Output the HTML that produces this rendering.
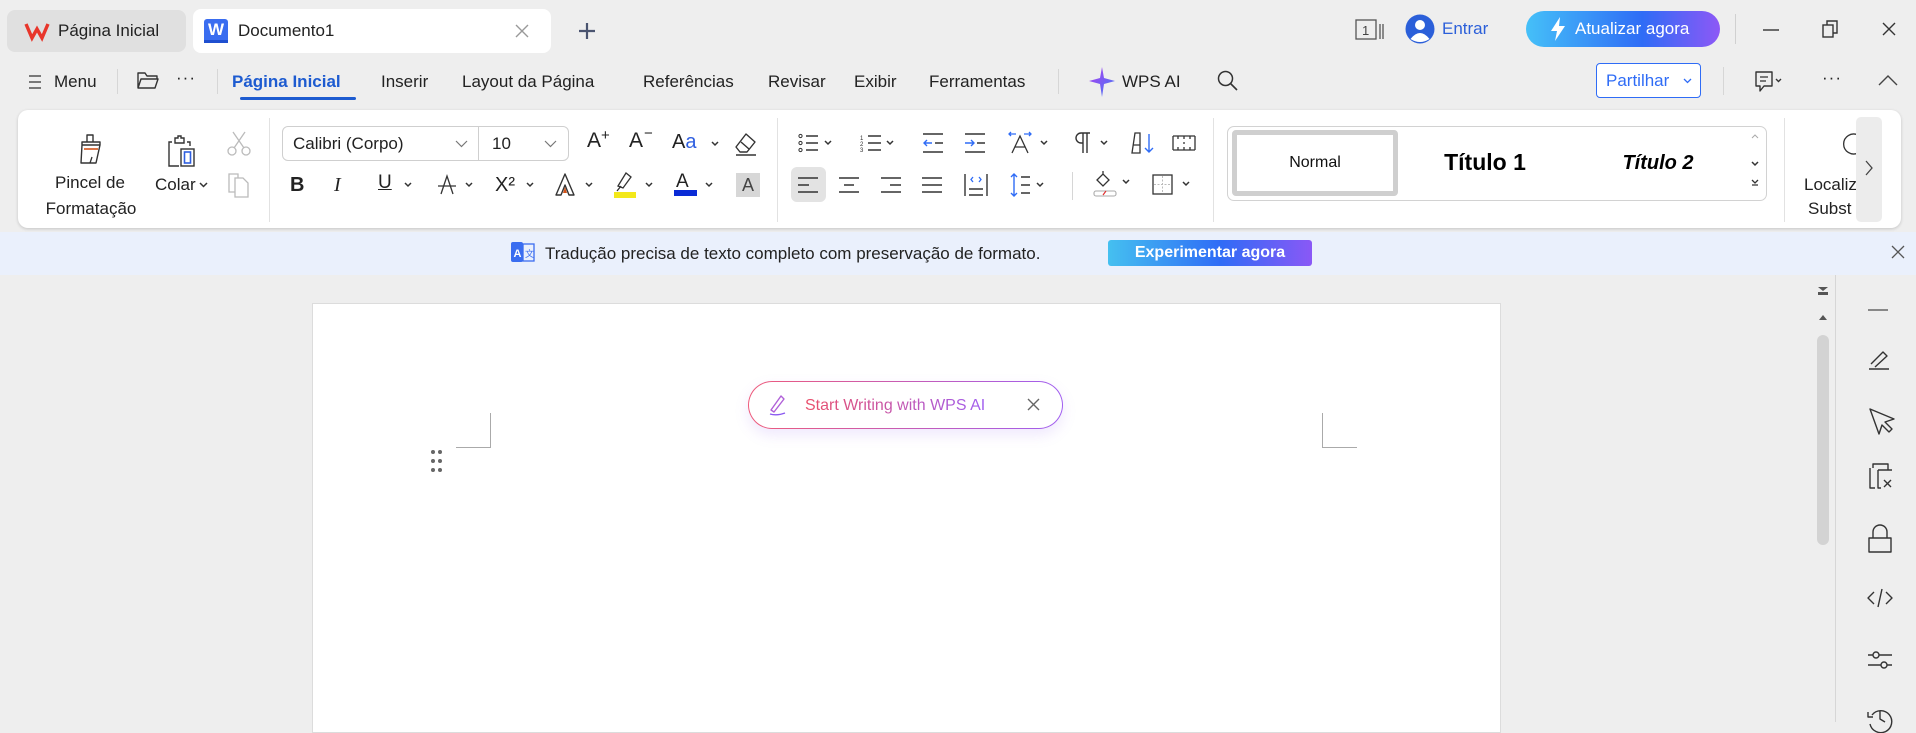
<!DOCTYPE html>
<html><head><meta charset="utf-8"><style>
*{margin:0;padding:0;box-sizing:border-box}
body{width:1916px;height:722px;overflow:hidden;background:#eeeeee;font-family:"Liberation Sans",sans-serif;color:#222;position:relative}
.a{position:absolute}
.t{position:absolute;white-space:nowrap;font-size:17px;line-height:20px;color:#222}
.c{transform:translateX(-50%)}
svg{position:absolute;overflow:visible}
.sep{position:absolute;width:1px;background:#d6d6d6}
</style></head><body>
<!-- tabs -->
<div class="a" style="left:7px;top:10px;width:179px;height:42px;background:#e0e0e0;border-radius:8px"></div>
<svg style="left:25px;top:22px" width="24" height="18" viewBox="0 0 24 18"><path d="M1 2 L7 16 L12 7 L17 16 L23 2" fill="none" stroke="#e8362b" stroke-width="3.4" stroke-linejoin="miter"/></svg>
<div class="t" style="left:58px;top:21px">Página Inicial</div>
<div class="a" style="left:193px;top:9px;width:358px;height:44px;background:#fff;border-radius:8px"></div>
<div class="a" style="left:204px;top:19px;width:24px;height:24px;background:#3a6df0;border-radius:3px;color:#fff;font-weight:bold;font-size:17px;text-align:center;line-height:22px">W</div>
<div class="a" style="left:204px;top:40px;width:24px;height:3px;background:#1f4fd0"></div>
<div class="t" style="left:238px;top:21px">Documento1</div>
<svg style="left:515px;top:24px" width="14" height="14"><path d="M1 1L13 13M13 1L1 13" stroke="#999" stroke-width="1.4"/></svg>
<svg style="left:578px;top:22px" width="18" height="18"><path d="M9 1V17M1 9H17" stroke="#4a5470" stroke-width="2.2"/></svg>
<!-- top right -->
<svg style="left:1355px;top:19px" width="30" height="22"><rect x="1" y="1" width="20" height="19" fill="none" stroke="#555" stroke-width="1.3"/><text x="7" y="16" font-size="13" font-family="Liberation Sans" fill="#444">1</text><path d="M25 5V20M28 5V20" stroke="#555" stroke-width="1.3"/></svg>
<svg style="left:1405px;top:14px" width="30" height="30"><circle cx="15" cy="15" r="14.5" fill="#2b5fd9"/><circle cx="15" cy="11" r="5" fill="#fff"/><path d="M5.5 25 Q15 13 24.5 25 Q15 31 5.5 25Z" fill="#fff"/></svg>
<div class="t" style="left:1442px;top:19px;color:#2b5fd9">Entrar</div>
<div class="a" style="left:1526px;top:11px;width:194px;height:36px;border-radius:18px;background:linear-gradient(90deg,#45c0f8,#2f6cf6 60%,#8d58f6)"></div>
<svg style="left:1550px;top:17px" width="16" height="24"><path d="M10 0L1 14H7L5 24L15 9H9Z" fill="#fff"/></svg>
<div class="t" style="left:1575px;top:19px;color:#fff">Atualizar agora</div>
<div class="sep" style="left:1735px;top:14px;height:30px;background:#d0d0d0"></div>
<svg style="left:1763px;top:29px" width="16" height="2"><path d="M0 1H16" stroke="#333" stroke-width="1.4"/></svg>
<svg style="left:1822px;top:20px" width="16" height="18"><rect x="1" y="5" width="10" height="12" fill="none" stroke="#333" stroke-width="1.4"/><path d="M5 5V1H15V13H11" fill="none" stroke="#333" stroke-width="1.4"/></svg>
<svg style="left:1882px;top:22px" width="14" height="14"><path d="M1 1L13 13M13 1L1 13" stroke="#333" stroke-width="1.4"/></svg>
<!-- menu row -->
<svg style="left:29px;top:75px" width="12" height="14"><path d="M0 1H12M0 7H12M0 13H12" stroke="#333" stroke-width="1.3"/></svg>
<div class="t" style="left:54px;top:72px">Menu</div>
<div class="sep" style="left:117px;top:69px;height:25px"></div>
<svg style="left:137px;top:71px" width="22" height="19"><path d="M1 17V2H8L10 5H20V8M1 17L4 8H21L18 17Z" fill="none" stroke="#333" stroke-width="1.4" stroke-linejoin="round"/></svg>
<div class="t" style="left:176px;top:68px;letter-spacing:1px">···</div>
<div class="sep" style="left:217px;top:69px;height:25px"></div>
<div class="t" style="left:232px;top:72px;color:#1d5bd0;font-weight:bold">Página Inicial</div>
<div class="a" style="left:240px;top:97px;width:116px;height:3px;background:#1d5bd0;border-radius:2px"></div>
<div class="t" style="left:381px;top:72px">Inserir</div>
<div class="t" style="left:462px;top:72px">Layout da Página</div>
<div class="t" style="left:643px;top:72px">Referências</div>
<div class="t" style="left:768px;top:72px">Revisar</div>
<div class="t" style="left:854px;top:72px">Exibir</div>
<div class="t" style="left:929px;top:72px">Ferramentas</div>
<div class="sep" style="left:1058px;top:69px;height:25px"></div>
<svg style="left:1088px;top:67px" width="28" height="30"><defs><linearGradient id="g" x1="0" y1="0" x2="1" y2="1"><stop offset="0" stop-color="#b23cf0"/><stop offset="1" stop-color="#3f7cf5"/></linearGradient></defs><path d="M14 0 L16 11 L27 14 L16 17 L14 30 L12 17 L1 14 L12 11Z" fill="url(#g)"/></svg>
<div class="t" style="left:1122px;top:72px">WPS AI</div>
<svg style="left:1217px;top:70px" width="22" height="22"><circle cx="8.5" cy="8.5" r="7" fill="none" stroke="#333" stroke-width="1.5"/><path d="M13.5 13.5L20 20" stroke="#333" stroke-width="1.6"/></svg>
<div class="a" style="left:1596px;top:63px;width:105px;height:35px;border:1.3px solid #2f6cf6;border-radius:4px;background:#fff"></div>
<div class="t" style="left:1606px;top:71px;color:#2f6cf6">Partilhar</div>
<svg style="left:1683px;top:78px" width="9" height="6"><path d="M1 1L4.5 4.5L8 1" fill="none" stroke="#2f6cf6" stroke-width="1.3"/></svg>
<div class="sep" style="left:1723px;top:67px;height:28px"></div>
<svg style="left:1755px;top:71px" width="28" height="22"><path d="M1 1H17V15H9L5 20V15H1Z" fill="none" stroke="#333" stroke-width="1.4" stroke-linejoin="round"/><path d="M5 6H13M5 10H11" stroke="#333" stroke-width="1.3"/><path d="M21 8L23.5 10.5L26 8" fill="none" stroke="#333" stroke-width="1.4"/></svg>
<div class="t" style="left:1822px;top:68px;letter-spacing:1px">···</div>
<svg style="left:1878px;top:74px" width="20" height="12"><path d="M1 11L10 2L19 11" fill="none" stroke="#444" stroke-width="1.4"/></svg>
<!-- ribbon -->
<div class="a" style="left:18px;top:110px;width:1883px;height:118px;background:#fff;border-radius:10px;box-shadow:0 1px 3px rgba(0,0,0,.18)"></div>
<svg style="left:76px;top:133px" width="30" height="34"><path d="M11 9V2H17V9M6 12H24V9H6Z M6 12L5 30H20L24 12" fill="none" stroke="#333" stroke-width="1.4" stroke-linejoin="round"/><path d="M8 16H22" stroke="#d3541b" stroke-width="1.6"/><path d="M14 30L16 24" stroke="#333" stroke-width="1.3"/></svg>
<div class="t c" style="left:90px;top:173px">Pincel de</div>
<div class="t c" style="left:91px;top:199px">Formatação</div>
<svg style="left:167px;top:134px" width="32" height="34"><path d="M5 8H2V32H12M20 8H23V12" fill="none" stroke="#333" stroke-width="1.4"/><path d="M8 9V4H11V2H14V4H17V9Z" fill="none" stroke="#333" stroke-width="1.4"/><rect x="14" y="15" width="13" height="17" fill="none" stroke="#333" stroke-width="1.4"/><rect x="17.5" y="18" width="6" height="11" fill="none" stroke="#2f5fe0" stroke-width="1.6"/></svg>
<div class="t" style="left:155px;top:175px">Colar</div>
<svg style="left:199px;top:182px" width="9" height="6"><path d="M1 1L4.5 4.5L8 1" fill="none" stroke="#333" stroke-width="1.5"/></svg>
<svg style="left:227px;top:131px" width="24" height="26"><circle cx="5" cy="20" r="4" fill="none" stroke="#bbb" stroke-width="1.3"/><circle cx="19" cy="20" r="4" fill="none" stroke="#bbb" stroke-width="1.3"/><path d="M7 17L18 1M17 17L6 1" stroke="#bbb" stroke-width="1.3"/></svg>
<svg style="left:227px;top:172px" width="24" height="26"><path d="M8 20H2V2H11V6" fill="none" stroke="#bbb" stroke-width="1.3"/><path d="M8 6H16L21 11V25H8Z" fill="none" stroke="#bbb" stroke-width="1.3"/></svg>
<div class="sep" style="left:269px;top:118px;height:104px;background:#e2e2e2"></div>
<div class="a" style="left:282px;top:126px;width:287px;height:35px;border:1px solid #cfcfcf;border-radius:6px"></div>
<div class="sep" style="left:478px;top:126px;height:35px;background:#cfcfcf"></div>
<div class="t" style="left:293px;top:134px">Calibri (Corpo)</div>
<svg style="left:455px;top:140px" width="13" height="8"><path d="M1 1L6.5 6.5L12 1" fill="none" stroke="#777" stroke-width="1.2"/></svg>
<div class="t" style="left:492px;top:134px">10</div>
<svg style="left:544px;top:140px" width="13" height="8"><path d="M1 1L6.5 6.5L12 1" fill="none" stroke="#777" stroke-width="1.2"/></svg>
<div class="t" style="left:587px;top:131px;font-size:21px">A</div><div class="t" style="left:601px;top:126px;font-size:15px">+</div>
<div class="t" style="left:629px;top:131px;font-size:21px">A</div><div class="t" style="left:644px;top:124px;font-size:15px">−</div>
<div class="t" style="left:672px;top:132px;font-size:20px">A<span style="color:#2f5fe0">a</span></div>
<svg style="left:711px;top:141px" width="8" height="6"><path d="M1 1L4 4L7 1" fill="none" stroke="#333" stroke-width="1.5"/></svg>
<svg style="left:733px;top:131px" width="26" height="26"><path d="M3 16L13 3L22 11L14 21H7Z M8 11L16 18" fill="none" stroke="#333" stroke-width="1.4" stroke-linejoin="round"/><path d="M3 24H23" stroke="#333" stroke-width="1.4"/></svg>
<!-- row2 left -->
<div class="t" style="left:290px;top:175px;font-size:20px;font-weight:bold">B</div>
<div class="t" style="left:334px;top:175px;font-size:20px;font-style:italic;font-family:'Liberation Serif'">I</div>
<div class="t" style="left:378px;top:173px;font-size:19px;text-decoration:underline">U</div>
<svg style="left:404px;top:182px" width="8" height="6"><path d="M1 1L4 4L7 1" fill="none" stroke="#333" stroke-width="1.5"/></svg>
<svg style="left:437px;top:174px" width="20" height="22"><path d="M4 20L10 2L16 20" fill="none" stroke="#333" stroke-width="1.3"/><path d="M1 12H19" stroke="#333" stroke-width="1.3"/></svg>
<svg style="left:465px;top:182px" width="8" height="6"><path d="M1 1L4 4L7 1" fill="none" stroke="#333" stroke-width="1.5"/></svg>
<div class="t" style="left:495px;top:175px;font-size:20px">X²</div>
<svg style="left:526px;top:182px" width="8" height="6"><path d="M1 1L4 4L7 1" fill="none" stroke="#333" stroke-width="1.5"/></svg>
<svg style="left:554px;top:173px" width="22" height="24"><path d="M2 22L11 1L20 22H15L11 12L7 22Z" fill="none" stroke="#333" stroke-width="1.4" stroke-linejoin="round"/><path d="M9 20L11 14L13 20Z" fill="#d3541b"/></svg>
<svg style="left:585px;top:182px" width="8" height="6"><path d="M1 1L4 4L7 1" fill="none" stroke="#333" stroke-width="1.5"/></svg>
<svg style="left:613px;top:170px" width="26" height="28"><path d="M5 16L13 3L18 7L10 18Z M4 21L8 16" fill="none" stroke="#333" stroke-width="1.3"/><rect x="1" y="22" width="22" height="6" fill="#f3e81a"/></svg>
<svg style="left:645px;top:182px" width="8" height="6"><path d="M1 1L4 4L7 1" fill="none" stroke="#333" stroke-width="1.5"/></svg>
<div class="t" style="left:676px;top:172px;font-size:19px">A</div>
<div class="a" style="left:674px;top:190px;width:23px;height:6px;background:#0a2bd6"></div>
<svg style="left:705px;top:182px" width="8" height="6"><path d="M1 1L4 4L7 1" fill="none" stroke="#333" stroke-width="1.5"/></svg>
<div class="a" style="left:736px;top:173px;width:24px;height:24px;background:#d7d7d7;text-align:center;line-height:24px;font-size:18px;color:#444">A</div>
<div class="sep" style="left:777px;top:118px;height:104px;background:#e2e2e2"></div>
<!-- para row1 -->
<svg style="left:798px;top:134px" width="40" height="18"><circle cx="2.5" cy="2" r="1.6" fill="none" stroke="#333"/><circle cx="2.5" cy="9" r="1.6" fill="none" stroke="#333"/><circle cx="2.5" cy="16" r="1.6" fill="none" stroke="#333"/><path d="M8 2H20M8 9H20M8 16H20" stroke="#333" stroke-width="1.4"/><path d="M27 7L30 10L33 7" fill="none" stroke="#333" stroke-width="1.5"/></svg>
<svg style="left:860px;top:134px" width="40" height="18"><text x="0" y="6" font-size="6" font-family="Liberation Sans" fill="#333">1</text><text x="0" y="12" font-size="6" fill="#333" font-family="Liberation Sans">2</text><text x="0" y="18" font-size="6" fill="#333" font-family="Liberation Sans">3</text><path d="M8 2H21M8 9H21M8 16H21" stroke="#333" stroke-width="1.4"/><path d="M27 7L30 10L33 7" fill="none" stroke="#333" stroke-width="1.5"/></svg>
<svg style="left:922px;top:133px" width="22" height="20"><path d="M1 1H21M1 19H21M13 10H21" stroke="#333" stroke-width="1.4"/><path d="M10 10H2M5 7L2 10L5 13" fill="none" stroke="#2f6cf6" stroke-width="1.4"/></svg>
<svg style="left:964px;top:133px" width="22" height="20"><path d="M1 1H21M1 19H21M13 10H21" stroke="#333" stroke-width="1.4"/><path d="M1 10H10M7 7L10 10L7 13" fill="none" stroke="#2f6cf6" stroke-width="1.4"/></svg>
<svg style="left:1008px;top:131px" width="45" height="24"><path d="M4 22L12 5L20 22M7 16H17" fill="none" stroke="#333" stroke-width="1.3"/><path d="M3 5L1 3L3 1M1 3H8M21 5L23 3L21 1M23 3H16" fill="none" stroke="#2f6cf6" stroke-width="1.3"/><path d="M33 10L36 13L39 10" fill="none" stroke="#333" stroke-width="1.5"/></svg>
<svg style="left:1072px;top:132px" width="40" height="22"><path d="M9 1H18M11 1V21M15 1V21M9 1A5 5 0 0 0 9 11H11" fill="none" stroke="#333" stroke-width="1.4"/><path d="M29 9L32 12L35 9" fill="none" stroke="#333" stroke-width="1.5"/></svg>
<svg style="left:1130px;top:131px" width="26" height="24"><path d="M2 22L5 2H10V22Z M3 14H10" fill="none" stroke="#333" stroke-width="1.3"/><path d="M19 3V21M15 17L19 21L23 17" fill="none" stroke="#2f6cf6" stroke-width="1.4"/></svg>
<svg style="left:1172px;top:135px" width="24" height="16"><path d="M1 1H23M1 15H23M1 1V15M23 1V15M6 1V4M12 1V4M18 1V4M6 12V15M12 12V15M18 12V15M12 7V9" fill="none" stroke="#333" stroke-width="1.3"/></svg>
<!-- para row2 -->
<div class="a" style="left:791px;top:167px;width:35px;height:35px;background:#e3e3e3;border-radius:6px"></div>
<svg style="left:798px;top:177px" width="21" height="16"><path d="M0 1H20M0 8H11M0 15H20" stroke="#333" stroke-width="1.4"/></svg>
<svg style="left:839px;top:177px" width="21" height="16"><path d="M0 1H20M5 8H15M0 15H20" stroke="#333" stroke-width="1.4"/></svg>
<svg style="left:881px;top:177px" width="21" height="16"><path d="M0 1H20M9 8H20M0 15H20" stroke="#333" stroke-width="1.4"/></svg>
<svg style="left:922px;top:177px" width="21" height="16"><path d="M0 1H20M0 8H20M0 15H20" stroke="#333" stroke-width="1.4"/></svg>
<svg style="left:964px;top:174px" width="24" height="22"><path d="M1 0V22M23 0V22M5 15H19M5 21H19" stroke="#333" stroke-width="1.4"/><path d="M9 3L7 5.5L9 8M15 3L17 5.5L15 8" fill="none" stroke="#2f6cf6" stroke-width="1.3"/></svg>
<svg style="left:1010px;top:173px" width="40" height="24"><path d="M4 1V23M1 4L4 1L7 4M1 20L4 23L7 20" fill="none" stroke="#2f6cf6" stroke-width="1.4"/><path d="M11 4H20M11 12H20M11 20H20" stroke="#333" stroke-width="1.4"/><path d="M27 10L30 13L33 10" fill="none" stroke="#333" stroke-width="1.5"/></svg>
<div class="sep" style="left:1072px;top:172px;height:28px"></div>
<svg style="left:1093px;top:170px" width="40" height="30"><path d="M4 10L10 4L16 10L10 16Z M10 4V1" fill="none" stroke="#333" stroke-width="1.3"/><rect x="1" y="21" width="22" height="5" rx="2" fill="none" stroke="#aaa" stroke-width="1.1"/><path d="M10 25L13 21" stroke="#e03030" stroke-width="1.2"/><path d="M30 10L33 13L36 10" fill="none" stroke="#333" stroke-width="1.5"/></svg>
<svg style="left:1152px;top:174px" width="42" height="22"><rect x="1" y="1" width="19" height="19" fill="none" stroke="#333" stroke-width="1.3"/><path d="M10.5 2V19M2 10.5H19" stroke="#bbb" stroke-width="1" stroke-dasharray="2 1.5"/><path d="M31 8L34 11L37 8" fill="none" stroke="#333" stroke-width="1.5"/></svg>
<div class="sep" style="left:1213px;top:118px;height:104px;background:#e2e2e2"></div>
<!-- styles -->
<div class="a" style="left:1227px;top:126px;width:540px;height:75px;border:1px solid #d2d2d2;border-radius:7px"></div>
<div class="a" style="left:1232px;top:130px;width:166px;height:66px;border:5px solid #cfcfcf;border-radius:4px;background:#fff"></div>
<div class="t c" style="left:1315px;top:153px;font-size:16px;color:#111">Normal</div>
<div class="t c" style="left:1485px;top:152px;font-size:23px;font-weight:bold;color:#000">Título 1</div>
<div class="t c" style="left:1658px;top:153px;font-size:20px;font-weight:bold;font-style:italic;color:#000">Título 2</div>
<svg style="left:1750px;top:132px" width="10" height="60"><path d="M2 6L5 3L8 6" fill="none" stroke="#aaa" stroke-width="1"/><path d="M2 30L5 33L8 30" fill="none" stroke="#333" stroke-width="1.5"/><path d="M2 48L5 51L8 48M2 53H8" fill="none" stroke="#333" stroke-width="1.3"/></svg>
<div class="sep" style="left:1784px;top:118px;height:104px;background:#e2e2e2"></div>
<svg style="left:1838px;top:133px" width="20" height="22"><path d="M20 2A10 10 0 1 0 20 20" fill="none" stroke="#333" stroke-width="1.3"/></svg>
<div class="t" style="left:1804px;top:175px">Localiz</div>
<div class="t" style="left:1808px;top:199px">Subst</div>
<div class="a" style="left:1856px;top:117px;width:26px;height:105px;background:#ececec;border-radius:5px"></div>
<svg style="left:1865px;top:160px" width="8" height="16"><path d="M1 1L7 8L1 15" fill="none" stroke="#444" stroke-width="1.3"/></svg>
<!-- translation bar -->
<div class="a" style="left:0;top:232px;width:1916px;height:43px;background:#eaf0fc"></div>
<svg style="left:511px;top:241px" width="24" height="22"><rect x="0" y="1" width="12" height="20" rx="2" fill="#3a6df0"/><text x="2.5" y="16" font-size="11" font-weight="bold" font-family="Liberation Sans" fill="#fff">A</text><rect x="12" y="3" width="11" height="17" fill="none" stroke="#3a6df0" stroke-width="1.3"/><text x="14" y="16" font-size="9" fill="#3a6df0" font-family="Noto Sans CJK SC">文</text></svg>
<div class="t" style="left:545px;top:244px">Tradução precisa de texto completo com preservação de formato.</div>
<div class="a" style="left:1108px;top:240px;width:204px;height:26px;border-radius:3px;background:linear-gradient(90deg,#45c0f0,#2f6cf6 55%,#8a58f6);color:#fff;font-weight:bold;font-size:16px;line-height:26px;text-align:center">Experimentar agora</div>
<svg style="left:1891px;top:245px" width="14" height="14"><path d="M1 1L13 13M13 1L1 13" stroke="#555" stroke-width="1.3"/></svg>
<!-- doc area -->
<div class="a" style="left:312px;top:303px;width:1189px;height:430px;background:#fff;border:1px solid #dcdcdc"></div>
<div class="a" style="left:490px;top:413px;width:1px;height:34px;background:#aaa"></div>
<div class="a" style="left:456px;top:447px;width:35px;height:1px;background:#aaa"></div>
<div class="a" style="left:1322px;top:413px;width:1px;height:34px;background:#aaa"></div>
<div class="a" style="left:1322px;top:447px;width:35px;height:1px;background:#aaa"></div>
<svg style="left:431px;top:450px" width="12" height="22"><g fill="#666"><circle cx="2" cy="2" r="2"/><circle cx="9" cy="2" r="2"/><circle cx="2" cy="11" r="2"/><circle cx="9" cy="11" r="2"/><circle cx="2" cy="20" r="2"/><circle cx="9" cy="20" r="2"/></g></svg>
<div class="a" style="left:748px;top:381px;width:315px;height:48px;border-radius:24px;background:linear-gradient(90deg,#ee5a7a,#a05ef0);padding:1.3px;box-shadow:0 6px 14px rgba(150,100,240,.15)"><div style="width:100%;height:100%;background:#fff;border-radius:23px"></div></div>
<svg style="left:767px;top:394px" width="20" height="22"><path d="M4 16L14 2L17 5L7 18Z" fill="none" stroke="#b060d8" stroke-width="1.4" stroke-linejoin="round"/><path d="M3 20Q10 22 18 19" fill="none" stroke="#8a58f0" stroke-width="1.4"/></svg>
<div class="t" style="left:805px;top:396px;font-size:16px;background:linear-gradient(90deg,#ea4f6a,#a05ef0);-webkit-background-clip:text;color:transparent">Start Writing with WPS AI</div>
<svg style="left:1027px;top:398px" width="13" height="13"><path d="M1 1L12 12M12 1L1 12" stroke="#666" stroke-width="1.4"/></svg>
<!-- scrollbar -->
<svg style="left:1817px;top:286px" width="12" height="36"><path d="M1 1H11L6 5Z" fill="#555"/><rect x="1" y="6" width="10" height="3" fill="#555"/><path d="M2 34L6 29L10 34Z" fill="#555"/></svg>
<div class="a" style="left:1817px;top:335px;width:12px;height:210px;background:#d3d3d3;border-radius:6px"></div>
<div class="a" style="left:1835px;top:275px;width:1px;height:447px;background:#d6d6d6"></div>
<div class="a" style="left:1836px;top:275px;width:80px;height:447px;background:#eeeeee"></div>
<svg style="left:1865px;top:304px" width="30" height="400"><g fill="none" stroke="#333" stroke-width="1.4" stroke-linejoin="round">
<path d="M3 6H23" stroke="#666"/>
<path d="M4 65H24M6 60L18 48L22 52L10 63" />
<path d="M5 105L14 130L17 121L24 128L27 125L20 118L29 115Z"/>
<path d="M5 164V184H10M8 164V160H23V166M13 166H27M13 166V184H16" /><path d="M19 176L26 183M26 176L19 183"/>
<path d="M8 234V228A7 7 0 0 1 22 228V234M4 234H26V248H4Z"/>
<path d="M9 288L3 294L9 300M21 288L27 294L21 300M17 285L13 303"/>
<path d="M3 351H27M3 361H27"/><circle cx="11" cy="351" r="3" fill="#eee"/><circle cx="19" cy="361" r="3" fill="#eee"/>
<path d="M7 411A11 11 0 1 1 5 420M3 408V413H8M15 407V415L20 418"/>
</g></svg>
</body></html>
